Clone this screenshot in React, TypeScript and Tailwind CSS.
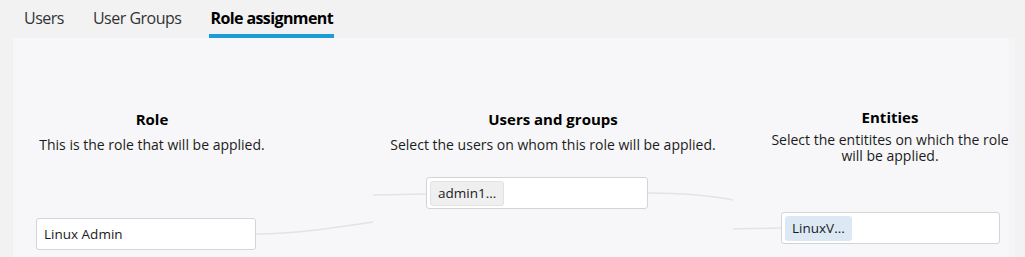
import React from 'react';

const tabs = ['Users', 'User Groups', 'Role assignment'];

const App: React.FC = () => {
  return (
    <div className="w-[1025px] h-[257px] overflow-hidden bg-[#f2f2f3] font-['Open_Sans',sans-serif] text-[#1b1b1b]">
      <div className="flex h-[38px] pl-[24px] gap-[29px]">
        {tabs.map((t, i) => (
          <div key={t} className="flex flex-col justify-between">
            <span
              className={`pt-[7px] text-[16px] leading-[22px] ${
                i === 2 ? 'font-bold text-black tracking-[-0.6px]' : 'text-[#333] tracking-[-0.5px]'
              }`}
            >
              {t}
            </span>
            {i === 2 ? <div className="h-[4px] bg-[#1b9bd8] -mx-[1px]" /> : <div className="h-[4px]" />}
          </div>
        ))}
      </div>

      <div className="relative ml-[13px] w-[1002px] h-[219px] bg-[#f7f7f9] border-r-[6px] border-[#f4f4f6]">
        <svg className="absolute inset-0" width="1002" height="219" fill="none">
          <path d="M243 196 C 280 196, 320 190, 360 184" stroke="#e3e3e6" strokeWidth="1.5" />
          <path d="M360 157 L 413 156" stroke="#e3e3e6" strokeWidth="1.5" />
          <path d="M635 155 C 670 155, 700 158, 720 162" stroke="#e3e3e6" strokeWidth="1.5" />
          <path d="M720 191 L 768 190" stroke="#e3e3e6" strokeWidth="1.5" />
        </svg>

        {/* Role node */}
        <div className="absolute left-[14px] top-[70px] flex flex-col items-center w-[250px]">
          <div className="text-[15px] leading-[22px] font-bold text-black">Role</div>
          <div className="text-[14px] leading-[18px] mt-[6px]">This is the role that will be applied.</div>
        </div>
        <div className="absolute left-[23px] top-[180px] w-[220px] h-[32px] bg-white border border-[#d4d4d6] rounded-[3px] flex items-center px-[7px] text-[13.5px]">
          Linux Admin
        </div>

        {/* Users and groups node */}
        <div className="absolute left-[360px] top-[70px] flex flex-col items-center w-[360px]">
          <div className="text-[15px] leading-[22px] font-bold text-black">Users and groups</div>
          <div className="text-[14px] leading-[18px] mt-[6px]">Select the users on whom this role will be applied.</div>
        </div>
        <div className="absolute left-[413px] top-[139px] w-[222px] h-[32px] bg-white border border-[#d4d4d6] rounded-[3px] flex items-center px-[3px]">
          <span className="h-[25px] px-[7px] flex items-center bg-[#efeff0] border border-[#e2e2e4] rounded-[3px] text-[13.5px]">
            admin1...
          </span>
        </div>

        {/* Entities node */}
        <div className="absolute left-[754px] top-[68px] flex flex-col items-center w-[246px]">
          <div className="text-[15px] leading-[22px] font-bold text-black">Entities</div>
          <div className="text-[14px] leading-[16px] mt-[4px] text-center">
            Select the entitites on which the role will be applied.
          </div>
        </div>
        <div className="absolute left-[768px] top-[174px] w-[219px] h-[32px] bg-white border border-[#d4d4d6] rounded-[3px] flex items-center px-[3px]">
          <span className="h-[25px] px-[7px] flex items-center bg-[#dce9f5] rounded-[3px] text-[13.5px]">
            LinuxV...
          </span>
        </div>
      </div>
    </div>
  );
};

export default App;
